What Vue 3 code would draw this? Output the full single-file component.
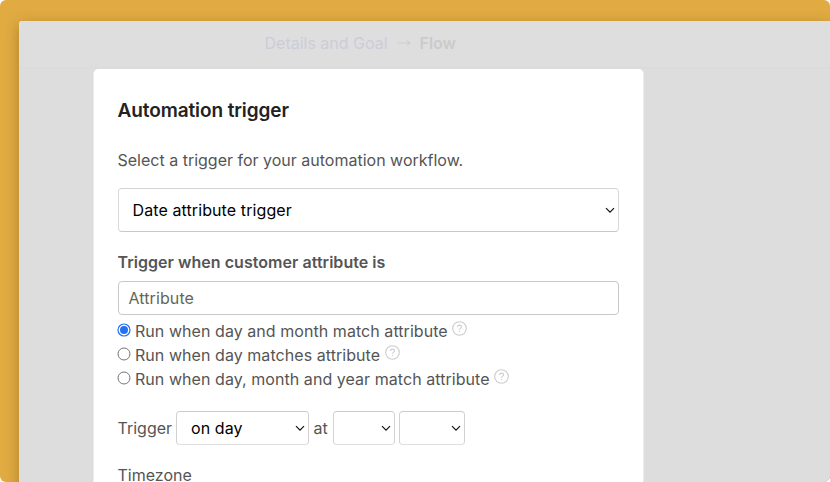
<script setup>
import { ref } from 'vue'

const selected = ref(0)
const options = [
  'Run when day and month match attribute',
  'Run when day matches attribute',
  'Run when day, month and year match attribute',
]
</script>

<template>
  <div class="frame">
    <div class="window">
      <header class="steps">
        <span class="step">Details and Goal</span>
        <svg class="arrow" width="14" height="10" viewBox="0 0 14 10">
          <path d="M0.5 5H12.5M9.8 2.6L12.7 5L9.8 7.4" />
        </svg>
        <span class="current">Flow</span>
      </header>
      <main class="card">
        <h1>Automation trigger</h1>
        <p class="intro">Select a trigger for your automation workflow.</p>
        <div class="select main-select">
          <span class="value">Date attribute trigger</span>
          <svg class="chev" width="10" height="7" viewBox="0 0 10 7"><path d="M1 1.2L5 5.2L9 1.2" /></svg>
        </div>
        <h2>Trigger when customer attribute is</h2>
        <div class="field">Attribute</div>
        <div class="options">
          <div v-for="(o, i) in options" :key="o" class="option" @click="selected = i">
            <svg class="radio" :class="{ on: selected === i }" width="14" height="14" viewBox="0 0 14 14">
              <circle class="ring" cx="7" cy="7" r="6" />
              <circle v-if="selected === i" class="dot" cx="7" cy="7" r="4" />
            </svg>
            <span class="label">{{ o }}</span>
            <svg class="help" width="16" height="16" viewBox="0 0 16 16">
              <circle cx="7.5" cy="8.5" r="6.8" />
              <path d="M5.5 7.1C5.5 5.8 6.3 5.1 7.5 5.1S9.5 5.9 9.5 6.9C9.5 8.1 7.6 8.3 7.6 9.7" />
              <path d="M7.6 11V12" />
            </svg>
          </div>
        </div>
        <div class="schedule">
          <span class="word">Trigger</span>
          <div class="select small day">
            <span class="value">on day</span>
            <svg class="chev" width="10" height="7" viewBox="0 0 10 7"><path d="M1 1.2L5 5.2L9 1.2" /></svg>
          </div>
          <span class="at">at</span>
          <div class="select small hour">
            <svg class="chev" width="10" height="7" viewBox="0 0 10 7"><path d="M1 1.2L5 5.2L9 1.2" /></svg>
          </div>
          <div class="select small minute">
            <svg class="chev" width="10" height="7" viewBox="0 0 10 7"><path d="M1 1.2L5 5.2L9 1.2" /></svg>
          </div>
        </div>
        <div class="zone">Timezone</div>
      </main>
    </div>
  </div>
</template>

<style>
body {
  background: #fff;
}
</style>

<style scoped>
* {
  box-sizing: border-box;
}
.frame {
  width: 830px;
  height: 482px;
  padding: 21px 0 0 19px;
  overflow: hidden;
  border-radius: 6px;
  background: #e1ab42;
  font-family: Inter, sans-serif;
  font-size: 16px;
  line-height: 24px;
  color: #555;
}
.window {
  height: 500px;
  background: #ddd;
  border-top-left-radius: 3px;
  box-shadow: 0 4px 14px rgba(70, 50, 10, 0.36);
}
.steps {
  display: flex;
  align-items: center;
  height: 47px;
  padding: 0 0 2px 245.5px;
  background: #dedede;
  border-bottom: 1px solid #dadada;
  border-top-left-radius: 3px;
}
.step {
  width: 132px;
  color: #cdccd9;
  white-space: nowrap;
}
.arrow {
  margin-top: -1px;
  fill: none;
  stroke: #cecece;
  stroke-width: 1.2;
}
.current {
  margin-left: 9px;
  font-weight: 600;
  color: #cbcbcb;
}
.card {
  width: 551px;
  height: 440px;
  margin: 1px 0 0 74px;
  padding: 26px 24px 0 23.5px;
  border: 1px solid #ececec;
  border-width: 0 1px;
  border-radius: 5px;
  background: #fff;
}
h1 {
  margin: 0;
  font-size: 19px;
  line-height: 32px;
  font-weight: 600;
  letter-spacing: -0.1px;
  color: #222;
}
.intro {
  margin: 21px 0 16px;
}
.select {
  display: flex;
  align-items: center;
  justify-content: space-between;
  border: 1px solid #ccc;
  border-radius: 4px;
  background: #fff;
  color: #000;
}
.value {
  letter-spacing: 0.1px;
}
.main-select {
  width: 501.9px;
  height: 44px;
  padding: 0 3px 0 14px;
  border-color: #d4d4d4 #d8d8d8 #c8c8c8;
}
.chev {
  flex: none;
  margin-left: auto;
  fill: none;
  stroke: #111;
  stroke-width: 1.2;
}
h2 {
  margin: 18px 0 7px;
  font-size: 16px;
  line-height: 24px;
  font-weight: 600;
  letter-spacing: 0.04px;
}
.field {
  width: 501.9px;
  height: 34px;
  padding: 0 10px;
  border: 1px solid #c8c8c8;
  border-radius: 4px;
  line-height: 32px;
  letter-spacing: 0.1px;
  color: #666654;
}
.options {
  padding-top: 4px;
}
.option {
  display: flex;
  align-items: center;
  height: 24px;
}
.label {
  letter-spacing: 0.055px;
}
.radio {
  flex: none;
  margin: -2px 4px 0 -0.5px;
}
.ring {
  fill: #fff;
  stroke: #767676;
}
.on .ring {
  stroke: #2370f5;
  stroke-width: 1.2;
}
.dot {
  fill: #2370f5;
}
.help {
  flex: none;
  margin: -6px 0 0 4.5px;
  fill: none;
  stroke: #ccc;
  stroke-width: 1.1;
}
.schedule {
  display: flex;
  align-items: center;
  margin-top: 20px;
}
.word {
  width: 58.5px;
}
.small {
  height: 34px;
  padding: 0 3px 0 14px;
  border-color: #ccc #d2d2d2 #dedede;
}
.day {
  width: 133px;
}
.at {
  width: 23.5px;
  padding-left: 4.5px;
}
.hour {
  width: 62.5px;
  margin-right: 4px;
}
.minute {
  width: 66px;
}
.zone {
  margin-top: 18px;
}
</style>
